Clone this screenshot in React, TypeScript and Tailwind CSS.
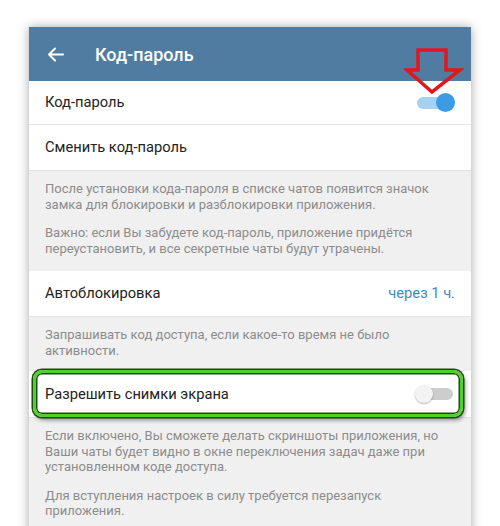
import React from "react";

const font = { fontFamily: "Roboto, 'Noto Sans', sans-serif" };

function BackArrow() {
  return (
    <svg width="17" height="15" viewBox="0 0 17 15" fill="none" aria-hidden>
      <path
        d="M16 7.5H2M8 1.5 2 7.5l6 6"
        stroke="white"
        strokeWidth="2"
        strokeLinecap="round"
        strokeLinejoin="round"
      />
    </svg>
  );
}

function RedArrow() {
  return (
    <svg
      width="60"
      height="48"
      viewBox="0 0 60 48"
      fill="none"
      aria-hidden
      className="absolute left-[375px] top-[21px]"
    >
      <path
        d="M14 2h28v20h14L28 44 3 22h11V2Z"
        stroke="#e3161b"
        strokeWidth="3.5"
        strokeLinejoin="miter"
      />
    </svg>
  );
}

function Toggle({ on }: { on: boolean }) {
  if (on) {
    return (
      <div className="relative h-[19px] w-[40px]">
        <div className="absolute left-[2px] top-[3.5px] h-[12px] w-[32px] rounded-full bg-[#a4d2f5]" />
        <div className="absolute right-0 top-0 h-[19px] w-[19px] rounded-full bg-[#3d9be3]" />
      </div>
    );
  }
  return (
    <div className="relative h-[18px] w-[40px]">
      <div className="absolute right-[2px] top-[3px] h-[12px] w-[32px] rounded-full bg-[#cdcdcd]" />
      <div className="absolute left-0 top-0 h-[18px] w-[18px] rounded-full bg-[#f3f3f3] shadow-[0_1px_2px_rgba(0,0,0,0.3)]" />
    </div>
  );
}

function Row({
  label,
  right,
  h,
  divider,
}: {
  label: string;
  right?: React.ReactNode;
  h: string;
  divider?: boolean;
}) {
  return (
    <div
      className={`flex items-center justify-between bg-white px-4 ${h} ${
        divider ? "border-b border-[#e4e4e4]" : ""
      }`}
    >
      <span className="text-[14.7px] text-[#222]">{label}</span>
      {right}
    </div>
  );
}

function Info({ items, pb }: { items: string[]; pb: string }) {
  return (
    <div
      className={`flex flex-col gap-[13px] border-t border-[#e2e2e2] bg-[#f0f0f0] px-4 pt-[10px] ${pb} text-[13px] leading-[15.5px] text-[#8c8c8c]`}
    >
      {items.map((t) => (
        <p key={t}>{t}</p>
      ))}
    </div>
  );
}

export default function App() {
  return (
    <div className="h-[526px] overflow-hidden bg-white pt-[27px]" style={font}>
      <div className="relative mx-auto h-[600px] w-[442px] bg-[#f0f0f0] shadow-[0_0_10px_rgba(0,0,0,0.35)]">
        <div className="flex h-[54px] items-center bg-[#517ca1] pl-[18px]">
          <BackArrow />
          <span className="ml-[31px] text-[18px] font-medium text-white">
            Код-пароль
          </span>
        </div>
        <Row label="Код-пароль" h="h-[44px]" divider right={<Toggle on />} />
        <Row label="Сменить код-пароль" h="h-[45px]" />
        <Info
          pb="pb-[15px]"
          items={[
            "После установки кода-пароля в списке чатов появится значок замка для блокировки и разблокировки приложения.",
            "Важно: если Вы забудете код-пароль, приложение придётся переустановить, и все секретные чаты будут утрачены.",
          ]}
        />
        <Row
          label="Автоблокировка"
          h="h-[45px]"
          right={<span className="text-[14.7px] text-[#3a8ccc]">через 1 ч.</span>}
        />
        <Info
          pb="pb-[13px]"
          items={["Запрашивать код доступа, если какое-то время не было активности."]}
        />
        <div className="relative">
          <Row label="Разрешить снимки экрана" h="h-[46px]" right={<Toggle on={false} />} />
          <div className="pointer-events-none absolute -top-[1px] left-[4px] right-[8px] h-[47px] rounded-[9px] border-[3px] border-[#4fd12b] shadow-[0_0_0_1.5px_#1d4a10,inset_0_0_0_1.5px_#1d4a10,2px_3px_4px_rgba(0,0,0,0.45)]" />
        </div>
        <Info
          pb="pb-[15px]"
          items={[
            "Если включено, Вы сможете делать скриншоты приложения, но Ваши чаты будет видно в окне переключения задач даже при установленном коде доступа.",
            "Для вступления настроек в силу требуется перезапуск приложения.",
          ]}
        />
        <RedArrow />
      </div>
    </div>
  );
}
